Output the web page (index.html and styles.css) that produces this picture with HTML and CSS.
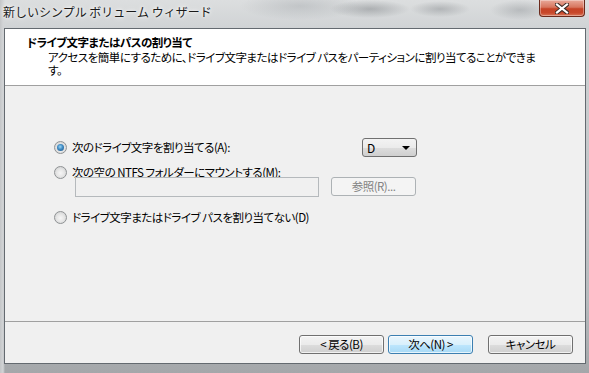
FILE: index.html
```html
<!DOCTYPE html>
<html lang="ja">
<head>
    <meta charset="UTF-8">
    <title>新しいシンプル ボリューム ウィザード</title>
    <link rel="stylesheet" href="styles.css">
</head>
<body>
<div class="window">
    <div class="titlebar">
        <div class="title">新しいシンプル ボリューム ウィザード</div>
        <div class="close">
            <svg width="14" height="11" viewBox="0 0 14 11">
                <path d="M2 1.5 L12 9.5 M12 1.5 L2 9.5" stroke="#3a2a25" stroke-width="4.2" stroke-linecap="square"/>
                <path d="M2 1.5 L12 9.5 M12 1.5 L2 9.5" stroke="#fff" stroke-width="2.2" stroke-linecap="square"/>
            </svg>
        </div>
    </div>
    <div class="client">
        <div class="header">
            <div class="head-title">ドライブ文字またはパスの割り当て</div>
            <div class="head-desc">アクセスを簡単にするために、ドライブ文字またはドライブ パスをパーティションに割り当てることができます。</div>
        </div>
        <div class="body">
            <div class="row row-first">
                <label class="option"><span class="radio checked"></span>次のドライブ文字を割り当てる(A):</label>
                <div class="combo"><span>D</span><span class="arrow"></span></div>
            </div>
            <div class="row row-second">
                <label class="option"><span class="radio"></span>次の空の NTFS フォルダーにマウントする(M):</label>
            </div>
            <div class="path-row">
                <div class="path-input"></div>
                <div class="btn disabled">参照(R)...</div>
            </div>
            <div class="row row-last">
                <label class="option"><span class="radio"></span>ドライブ文字またはドライブ パスを割り当てない(D)</label>
            </div>
        </div>
        <div class="footer">
            <div class="btn">&lt; 戻る(B)</div>
            <div class="btn default">次へ(N) &gt;</div>
            <div class="btn cancel">キャンセル</div>
        </div>
    </div>
</div>
</body>
</html>
```

FILE: styles.css
```css
*{
    margin: 0;
    padding: 0;
    box-sizing: border-box;
}
body{
    width: 589px;
    height: 373px;
    overflow: hidden;
    font-family: "Noto Sans CJK JP", "Noto Sans", sans-serif;
    font-size: 12px;
    color: #000;
}
.window{
    height: 373px;
    display: flex;
    flex-direction: column;
    background:
        linear-gradient(90deg, #c4c6c8 0, #d2d4d6 3px, transparent 5px),
        linear-gradient(180deg, #dcdedf 0, #d0d3d5 28px, #b8bbbe 300px, #a4a7aa 373px);
}
.titlebar{
    height: 28px;
    display: flex;
    justify-content: space-between;
    align-items: flex-start;
    background:
        radial-gradient(ellipse 40px 9px at 370px 9px, rgba(90,95,100,.35), transparent),
        radial-gradient(ellipse 30px 8px at 440px 9px, rgba(90,95,100,.3), transparent),
        radial-gradient(ellipse 60px 14px at 300px 6px, rgba(150,155,160,.35), transparent),
        radial-gradient(ellipse 30px 10px at 520px 10px, rgba(110,115,120,.3), transparent);
}
.title{
    padding: 4px 0 0 3px;
    line-height: 16px;
    font-size: 12px;
    color: #1a1a1a;
    text-shadow: 0 0 6px #fff, 0 0 3px #fff;
}
.close{
    width: 46px;
    height: 17px;
    margin-right: 4px;
    border: 1px solid #6b2a1c;
    border-top: none;
    border-radius: 0 0 4px 4px;
    background: linear-gradient(180deg, #e9a99a 0, #d7765f 45%, #c54327 55%, #c8482b 80%, #d9775a 100%);
    box-shadow: inset 0 0 0 1px rgba(255,255,255,.35);
    display: flex;
    align-items: center;
    justify-content: center;
}
.client{
    flex: 1;
    margin: 0 3px 9px 4px;
    border: 1px solid #646a70;
    background: #f0f0f0;
    display: flex;
    flex-direction: column;
    font-size: 11.5px;
    letter-spacing: -0.5px;
    font-feature-settings: "palt";
}
.header{
    height: 57px;
    background: #fff;
    border-bottom: 1px solid #a0a0a0;
    padding: 6px 0 0 22px;
}
.head-title{
    font-weight: bold;
    line-height: 15px;
}
.head-desc{
    margin-top: 1px;
    padding-left: 21px;
    width: 520px;
    line-height: 13px;
}
.body{
    flex: 1;
    padding: 52px 0 0 49px;
    border-bottom: 1px solid #a0a0a0;
}
.row{
    display: flex;
    align-items: center;
    height: 13px;
}
.row-first{
    display: grid;
    grid-template-columns: 308px 55px;
    height: 19px;
}
.row-second{
    margin-top: 9px;
}
.row-last{
    margin-top: 14px;
}
.option{
    display: flex;
    align-items: center;
    gap: 5px;
    line-height: 13px;
    white-space: nowrap;
}
.radio{
    width: 13px;
    height: 13px;
    border-radius: 50%;
    border: 1px solid #8f9294;
    background: radial-gradient(circle at 50% 55%, #f6f6f6 0, #e6e6e6 45%, #c9cbcc 100%);
    position: relative;
    flex: none;
}
.radio.checked::after{
    content: "";
    position: absolute;
    left: 2px;
    top: 2px;
    width: 7px;
    height: 7px;
    border-radius: 50%;
    background: radial-gradient(circle at 45% 40%, #9bd7f7 0, #3f8ac2 45%, #1b4e80 100%);
}
.combo{
    height: 19px;
    border: 1px solid #707070;
    border-radius: 3px;
    background: linear-gradient(180deg, #f3f3f3 0, #ebebeb 50%, #dddddd 51%, #cfcfcf 100%);
    display: flex;
    align-items: center;
    justify-content: space-between;
    padding: 0 6px 0 4px;
    line-height: 15px;
    font-size: 12px;
}
.arrow{
    width: 0;
    height: 0;
    border-left: 4px solid transparent;
    border-right: 4px solid transparent;
    border-top: 4px solid #000;
}
.path-row{
    display: flex;
    gap: 12px;
    margin-top: -2px;
    padding-left: 21px;
}
.path-input{
    width: 244px;
    height: 20px;
    border: 1px solid #b5b9bc;
    background: #f0f0f0;
}
.btn{
    width: 85px;
    height: 19px;
    border: 1px solid #707070;
    border-radius: 3px;
    background: linear-gradient(180deg, #f3f3f3 0, #ebebeb 50%, #dddddd 51%, #cfcfcf 100%);
    box-shadow: inset 0 0 0 1px rgba(255,255,255,.7);
    display: flex;
    align-items: center;
    justify-content: center;
    line-height: 15px;
    white-space: nowrap;
}
.btn.disabled{
    border-color: #adb2b5;
    background: #f4f4f4;
    box-shadow: none;
    color: #838383;
}
.btn.default{
    border-color: #3c7fb1;
    background: linear-gradient(180deg, #eaf6fd 0, #d9f0fc 50%, #bee6fd 51%, #a7d9f5 100%);
}
.footer{
    height: 41px;
    display: flex;
    justify-content: flex-end;
    align-items: flex-start;
    gap: 4px;
    padding: 13px 12px 0 0;
}
.btn.cancel{
    margin-left: 11px;
}
```
